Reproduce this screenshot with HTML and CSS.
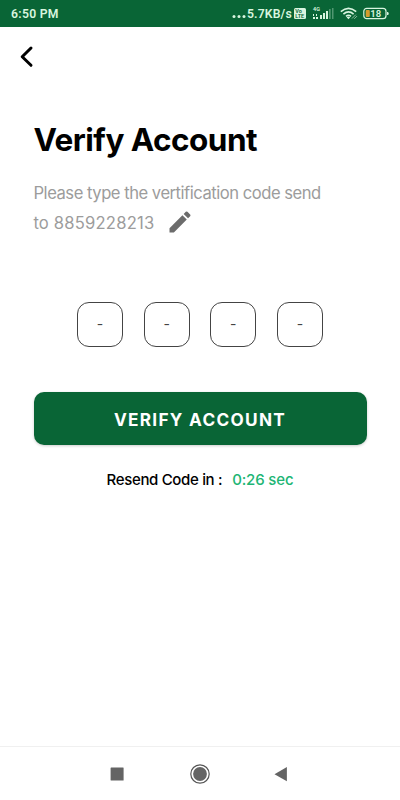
FILE: index.html
```html
<!DOCTYPE html>
<html lang="en">
<head>
<meta charset="utf-8">
<title>Verify Account</title>
<link rel="stylesheet" href="styles.css">
</head>
<body>
<header class="status">
  <span class="clock">6:50 PM</span>
  <div class="indicators">
    <svg class="dots" width="14" height="27" viewBox="0 0 14 27"><circle cx="2" cy="16.5" r="1.5"/><circle cx="7" cy="16.5" r="1.5"/><circle cx="12" cy="16.5" r="1.5"/></svg>
    <span class="speed">5.7KB/s</span>
    <svg class="volte" width="12" height="27" viewBox="0 0 12 27"><rect y="8" width="12" height="11" rx="1.5"/><text x="1.3" y="13.3">Vo</text><text x="1.3" y="18.2">LTE</text></svg>
    <svg class="signal" width="22" height="27" viewBox="0 0 22 27"><text x="1" y="10.5">4G</text><path d="M1 17h2v2H1zM1 14h1v2H1zM4 14h1v2H4zM4 17h2v2H4zM8 15h2v4H8zM11 13h2v6h-2zM14 11h2v8h-2z"/><path class="faint" d="M17 9h1.7v10H17zM20 8h1.5v11H20z"/></svg>
    <svg class="wifi" width="18" height="27" viewBox="0 0 18 27"><path d="M.8 11.7Q8.5 5 16.2 11.7M3.4 14.2Q8.5 9.7 13.6 14.2M6 16.3Q8.5 14.2 11 16.3"/><path class="fill" d="M6.6 17.2Q8.5 15.8 10.2 17.2L8.5 19.2z"/><path class="thin" d="M12 18.5l3.8-3.8M14.3 18.8l2.7-2.7"/></svg>
    <svg class="battery" width="26" height="27" viewBox="0 0 26 27"><rect class="case" x=".8" y="8.3" width="22.2" height="10.4" rx="3"/><rect class="charge" x="2.7" y="10" width="4.1" height="7" rx="1"/><path d="M24 12h.7q1 0 1 1.5t-1 1.5H24z"/><text x="7.3" y="17">18</text></svg>
  </div>
</header>
<main class="screen">
  <svg class="back" width="16" height="24" viewBox="0 0 16 24"><path d="M12 3L3.2 11.7l8.8 8.6"/></svg>
  <h1 class="title">Verify Account</h1>
  <div class="intro">
    <div class="line">Please type the vertification code send</div>
    <div class="recipient"><span class="to">to</span><span class="phone">8859228213</span><svg class="edit" width="28" height="28" viewBox="0 0 24 24"><path d="M3 17.25V21h3.75L17.81 9.94l-3.75-3.75L3 17.25zM20.71 7.04c.39-.39.39-1.02 0-1.41l-2.34-2.34a1 1 0 0 0-1.41 0l-1.83 1.83 3.75 3.75 1.83-1.83z"/></svg></div>
  </div>
  <div class="code">
    <div class="digit">-</div><div class="digit">-</div><div class="digit">-</div><div class="digit">-</div>
  </div>
  <button class="verify">VERIFY ACCOUNT</button>
  <div class="resend"><span class="label">Resend Code in :</span><span class="timer">0:26 sec</span></div>
</main>
<nav class="navbar">
  <svg width="20" height="20" viewBox="0 0 20 20"><rect x="3.6" y="3.6" width="13" height="13" rx=".5"/></svg>
  <svg width="20" height="20" viewBox="0 0 20 20"><circle class="ring" cx="10" cy="10" r="9.2"/><circle cx="10" cy="10" r="6.9"/></svg>
  <svg width="20" height="20" viewBox="0 0 20 20"><path d="M3.5 10.2L15.9 3v14.3z"/></svg>
</nav>
</body>
</html>
```
FILE: styles.css
```css
* { box-sizing: border-box; }
body {
  margin: 0;
  height: 800px;
  display: flex;
  flex-direction: column;
  background: #fff;
  font-family: Inter, "Liberation Sans", sans-serif;
  overflow: hidden;
}
svg { display: block; flex: none; }
.status {
  height: 26.5px;
  flex: none;
  display: flex;
  justify-content: space-between;
  align-items: flex-start;
  padding: 0 11px;
  background: #096536;
  color: #d8f5df;
  fill: #d8f5df;
  font: 600 12.2px/28px Roboto, sans-serif;
}
.indicators { display: flex; }
.clock { letter-spacing: .3px; }
.speed { margin-left: 1px; width: 45px; letter-spacing: .15px; white-space: nowrap; }
.volte { margin-left: 2px; }
.volte text { fill: #096536; font-size: 5.5px; letter-spacing: 0; }
.signal { margin-left: 6px; }
.signal text { font-size: 5.5px; }
.faint { opacity: .35; }
.wifi { margin-left: 6px; }
.wifi path { fill: none; stroke: #d8f5df; stroke-width: 1.6; }
.wifi .fill { fill: #d8f5df; stroke: none; }
.wifi .thin { stroke-width: 1; opacity: .65; }
.battery { margin-left: 5px; }
.battery .case { fill: none; stroke: #d8f5df; stroke-width: 1.2; }
.battery .charge { fill: #d59b2c; }
.battery text { font-size: 9.5px; }
.screen { flex: 1; display: flex; flex-direction: column; padding: 18px 33.5px 0; }
.back { margin-left: -14.5px; }
.back path { fill: none; stroke: #000; stroke-width: 3; stroke-linecap: round; stroke-linejoin: round; }
.title {
  margin: 51px 0 0;
  font-size: 31.5px;
  line-height: 40px;
  font-weight: 700;
  letter-spacing: -.52px;
  color: #000;
  white-space: nowrap;
}
.intro {
  margin-top: 19px;
  font-size: 16.6px;
  line-height: 29px;
  font-weight: 400;
  color: #9c9c9c;
  white-space: nowrap;
}
.line { letter-spacing: -.48px; }
.recipient { display: flex; height: 29px; line-height: 30px; }
.phone { margin-left: 5px; width: 102px; letter-spacing: .22px; }
.edit { margin-left: 10px; fill: #6c6c6c; }
.code { display: flex; justify-content: center; gap: 20.7px; margin-top: 65px; }
.digit {
  width: 46px;
  height: 45.5px;
  border: 1px solid #444;
  border-radius: 12px;
  text-align: center;
  line-height: 42px;
  font-size: 14px;
  color: #444;
}
.verify {
  margin: 45px 0 0;
  height: 53px;
  border: 0;
  border-radius: 10px;
  padding: 3px 0 0;
  background: #096536;
  box-shadow: 0 1px 3px #0003;
  color: #fff;
  font: 700 17.2px/24px Inter, sans-serif;
  letter-spacing: 1.3px;
}
.resend {
  display: flex;
  justify-content: center;
  margin-top: 22.5px;
  font-size: 15px;
  line-height: 24px;
  font-weight: 500;
  color: #000;
  white-space: nowrap;
}
.label { letter-spacing: -.34px; }
.timer { margin-left: 10px; color: #20b574; letter-spacing: -.15px; }
.navbar {
  height: 54px;
  flex: none;
  display: flex;
  justify-content: space-between;
  padding: 16.5px 109px 0 107px;
  border-top: 1px solid #f0f0f0;
  fill: #646464;
}
.navbar svg:nth-child(2) { margin-left: 1px; }
.ring { fill: none; stroke: #555; stroke-width: 1.2; }
```
